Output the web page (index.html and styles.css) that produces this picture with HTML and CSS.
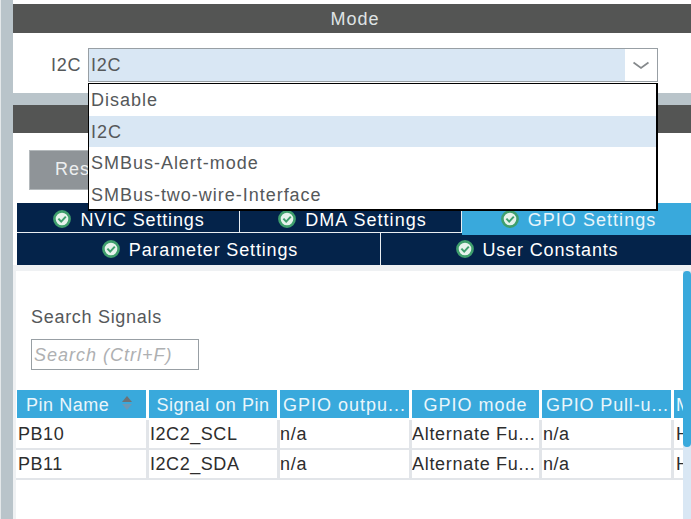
FILE: index.html
```html
<!DOCTYPE html>
<html lang="en">
<head>
<meta charset="utf-8">
<title>I2C Mode</title>
<link rel="stylesheet" href="styles.css">
</head>
<body>
<svg class="defs" width="0" height="0" aria-hidden="true">
  <symbol id="ok" viewBox="0 0 18 18">
    <circle cx="9" cy="9" r="7.6" fill="#e6f3ec" stroke="#3f9f6d" stroke-width="2.6"/>
    <path d="M5.4 8.6 8.2 11.6 12.8 6.6" fill="none" stroke="#3f9f6d" stroke-width="2"/>
  </symbol>
</svg>
<main class="page">
  <section class="mode">
    <h2 class="bar">Mode</h2>
    <div class="mode-row">
      <span class="mode-label">I2C</span>
      <div class="select">
        <span class="select-value">I2C</span>
        <span class="select-btn">
          <svg width="16" height="9" viewBox="0 0 16 9"><path d="M.5 1.500 8 7 15.500 1.500" fill="none" stroke="#85898c" stroke-width="1.800"/></svg>
        </span>
      </div>
    </div>
    <ul class="menu">
      <li>Disable</li>
      <li class="on">I2C</li>
      <li>SMBus-Alert-mode</li>
      <li>SMBus-two-wire-Interface</li>
    </ul>
  </section>

  <section class="config">
    <div class="bar bar-low"></div>
    <div class="reset-row"><div class="reset">Res</div></div>
    <div class="tabs">
      <div class="tab-row">
        <div class="tab t1"><svg class="ok"><use href="#ok"/></svg>NVIC Settings</div>
        <div class="tab t2"><svg class="ok"><use href="#ok"/></svg>DMA Settings</div>
        <div class="tab t3 active"><svg class="ok"><use href="#ok"/></svg>GPIO Settings</div>
      </div>
      <div class="tab-row row2">
        <div class="tab t4"><svg class="ok"><use href="#ok"/></svg>Parameter Settings</div>
        <div class="tab t5"><svg class="ok"><use href="#ok"/></svg>User Constants</div>
      </div>
    </div>
  </section>

  <section class="signals">
    <div class="signals-body">
      <label class="search-label" for="q">Search Signals</label>
      <input class="search" id="q" placeholder="Search (Ctrl+F)">
      <div class="table">
        <div class="th first">Pin Name
          <svg class="sort" width="14" height="16" viewBox="0 0 14 16"><path d="M7 1 12 7H2Z" fill="#6f7275"/><path d="M2 9H12L7 15Z" fill="#6d99b6"/></svg>
        </div>
        <div class="th">Signal on Pin</div>
        <div class="th gpio">GPIO outpu...</div>
        <div class="th gpio">GPIO mode</div>
        <div class="th gpio pull">GPIO Pull-u...</div>
        <div class="th edge">M</div>

        <div class="td wide">PB10</div>
        <div class="td">I2C2_SCL</div>
        <div class="td tight">n/a</div>
        <div class="td tight">Alternate Fu...</div>
        <div class="td">n/a</div>
        <div class="td edge">H</div>

        <div class="td wide">PB11</div>
        <div class="td">I2C2_SDA</div>
        <div class="td tight">n/a</div>
        <div class="td tight">Alternate Fu...</div>
        <div class="td">n/a</div>
        <div class="td edge">H</div>
      </div>
    </div>
    <div class="scrollbar"><div class="thumb"></div></div>
  </section>
</main>
</body>
</html>
```
FILE: styles.css
```css
* { box-sizing: border-box; }
html, body { margin: 0; padding: 0; height: 100%; overflow: hidden; }
body {
  background: #b9c4ca;
  border-left: 1px solid #e4e8ea;
  font-family: "Liberation Sans", Arial, sans-serif;
  font-size: 18px;
  letter-spacing: 0.55px;
}
.defs { position: absolute; }
.page {
  position: relative;
  margin-left: 12px;
  height: 519px;
  display: flex;
  flex-direction: column;
}
.mode {
  background: #fff;
  padding-top: 4px;
  height: 93px;
}
.bar {
  margin: 0;
  background: #545554;
  color: #dfe3e4;
  font-size: 18px;
  font-weight: 400;
  height: 29px;
  line-height: 31px;
  text-align: center;
  letter-spacing: 1px;
  padding-left: 6px;
}
.mode-row {
  display: flex;
  align-items: flex-start;
  padding: 15px 33px 0 38px;
  gap: 7px;
}
.mode-label { color: #55585a; line-height: 35px; width: 30px; letter-spacing: 0.8px; }
.select {
  flex: 1;
  height: 34px;
  display: flex;
  border: 1.5px solid #989fa4;
  background: #fff;
}
.select-value {
  flex: 1;
  background: #d9e7f4;
  color: #55585a;
  padding-left: 2px;
  line-height: 33px;
  letter-spacing: 0.8px;
}
.select-btn {
  width: 32px;
  display: flex;
  align-items: center;
  justify-content: center;
  padding-top: 1px;
}
.menu {
  position: absolute;
  z-index: 5;
  left: 75px;
  top: 83px;
  width: 570px;
  height: 128px;
  margin: 0;
  padding: 0;
  list-style: none;
  background: #fff;
  border: solid #000;
  border-width: 1.5px 2px 2px 1.5px;
  color: #55585a;
  letter-spacing: 0.98px;
}
.menu li {
  height: 31.5px;
  line-height: 32.5px;
  padding-left: 2px;
}
.menu li.on { background: #d9e7f4; }

.config {
  margin-top: 12px;
  background: #fff;
  height: 160px;
}
.bar-low { height: 28px; }
.reset-row { padding: 17px 0 0 16px; height: 70px; }
.reset {
  width: 59px;
  height: 40px;
  background: #8f9498;
  border: solid #b4b9bc;
  border-width: 1px 0 1px 1px;
  color: #eceeef;
  letter-spacing: 1px;
  line-height: 37px;
  padding-left: 25px;
  white-space: nowrap;
}
.tabs { margin-left: 4px; position: relative; letter-spacing: 0.85px; }
.tab-row { display: flex; height: 30px; background: #04234a; border-bottom: 1px solid #e9eef2; }
.row2 { height: 32px; border-bottom: 0; }
.tab {
  display: flex;
  align-items: center;
  justify-content: center;
  gap: 9px;
  color: #fff;
  background: #04234a;
  height: 29px;
  padding-top: 5px;
}
.row2 .tab { height: 32px; padding-top: 2px; }
.t1 { width: 223px; border-right: 1px solid #e9eef2; padding-left: 2px; }
.t2 { width: 222px; border-right: 1px solid #e9eef2; padding-left: 4px; letter-spacing: 1.05px; }
.t3 { flex: 1; }
.active { background: #39a9dc; color: #e8f5fb; height: 32px; padding: 2px 0 0 4px; position: relative; z-index: 1; letter-spacing: 1.05px; }
.t4 { width: 364px; border-right: 1px solid #e9eef2; padding-left: 3px; }
.t5 { flex: 1; padding-left: 2px; }
.ok { width: 18px; height: 18px; flex: none; margin-top: -3px; }

.signals {
  flex: 1;
  background: #eff1f3;
  padding-top: 6px;
  display: flex;
  position: relative;
  overflow: hidden;
}
.signals-body {
  flex: 1;
  margin-left: 3px;
  background: #fff;
  padding-top: 35px;
  min-width: 0;
}
.search-label {
  display: block;
  margin-left: 15px;
  color: #55585a;
  line-height: 22px;
  letter-spacing: 0.7px;
}
.search {
  display: block;
  margin: 11px 0 0 15px;
  width: 168px;
  height: 31px;
  border: 1.5px solid #989fa4;
  background: #fff;
  font: italic 18px "Liberation Sans", Arial, sans-serif;
  letter-spacing: 1px;
  padding: 2px 2px 0;
  outline: 0;
}
.search::placeholder { color: #aeb0b2; opacity: 1; }
.table {
  margin-top: 20px;
  display: grid;
  grid-template-columns: 133px 131px 132px 130px 132px 20px;
  grid-template-rows: 30px 30px 30px;
  width: 678px;
}
.th {
  background: #39a9dc;
  color: #eaf6fb;
  height: 28px;
  margin: 0 3px 2px 0;
  line-height: 30px;
  text-align: center;
  white-space: nowrap;
  overflow: hidden;
  position: relative;
}
.th.gpio { letter-spacing: 1px; }
.th.gpio.pull { letter-spacing: 0.85px; padding-left: 2px; }
.th.first { text-align: left; padding-left: 9px; margin-left: 1px; }
.th.edge { margin-right: 0; text-align: left; padding-left: 2px; }
.sort { position: absolute; left: 103px; top: 5px; }
.td {
  height: 30px;
  padding: 1px 0 0 1px;
  border-bottom: 2px solid #e2e5e9;
  border-right: 3px solid #e2e5e9;
  line-height: 27px;
  color: #2d2d2d;
  white-space: nowrap;
  overflow: hidden;
}
.td.wide { padding-left: 2px; }
.td.tight { padding-left: 0; letter-spacing: 0.7px; }
.td.edge { border-right: 0; padding-left: 2px; }
.scrollbar {
  position: absolute;
  right: 0;
  top: 6px;
  bottom: 0;
  width: 8px;
  background: #d9e7f4;
}
.thumb {
  width: 8px;
  height: 176px;
  background: #39a9dc;
  border-radius: 5px;
}
```
